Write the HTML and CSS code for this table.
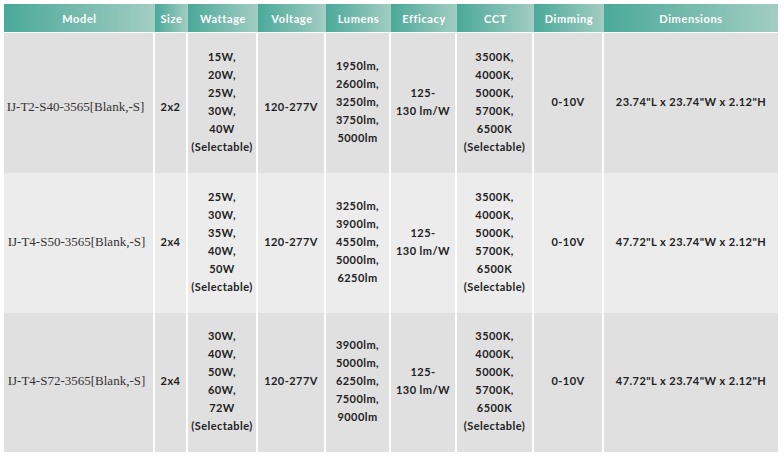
FILE: index.html
```html
<!DOCTYPE html>
<html lang="en">
<head>
<meta charset="utf-8">
<title>Specifications</title>
<link rel="stylesheet" href="styles.css">
</head>
<body>
<table class="spec">
  <colgroup>
    <col class="c-model"><col class="c-size"><col class="c-watt"><col class="c-volt"><col class="c-lum"><col class="c-eff"><col class="c-cct"><col class="c-dim"><col class="c-dims">
  </colgroup>
  <thead>
    <tr>
      <th>Model</th><th>Size</th><th>Wattage</th><th>Voltage</th><th>Lumens</th><th>Efficacy</th><th>CCT</th><th>Dimming</th><th>Dimensions</th>
    </tr>
  </thead>
  <tbody>
    <tr class="odd">
      <td class="model low">IJ-T2-S40-3565[Blank,-S]</td>
      <td class="low">2x2</td>
      <td>15W,<br>20W,<br>25W,<br>30W,<br>40W<br>(Selectable)</td>
      <td class="low">120-277V</td>
      <td>1950lm,<br>2600lm,<br>3250lm,<br>3750lm,<br>5000lm</td>
      <td>125-<br>130 lm/W</td>
      <td>3500K,<br>4000K,<br>5000K,<br>5700K,<br>6500K<br>(Selectable)</td>
      <td>0-10V</td>
      <td>23.74"L x 23.74"W x 2.12"H</td>
    </tr>
    <tr class="even">
      <td class="model">IJ-T4-S50-3565[Blank,-S]</td>
      <td>2x4</td>
      <td>25W,<br>30W,<br>35W,<br>40W,<br>50W<br>(Selectable)</td>
      <td>120-277V</td>
      <td>3250lm,<br>3900lm,<br>4550lm,<br>5000lm,<br>6250lm</td>
      <td>125-<br>130 lm/W</td>
      <td>3500K,<br>4000K,<br>5000K,<br>5700K,<br>6500K<br>(Selectable)</td>
      <td>0-10V</td>
      <td>47.72"L x 23.74"W x 2.12"H</td>
    </tr>
    <tr class="odd last">
      <td class="model">IJ-T4-S72-3565[Blank,-S]</td>
      <td>2x4</td>
      <td>30W,<br>40W,<br>50W,<br>60W,<br>72W<br>(Selectable)</td>
      <td>120-277V</td>
      <td>3900lm,<br>5000lm,<br>6250lm,<br>7500lm,<br>9000lm</td>
      <td>125-<br>130 lm/W</td>
      <td>3500K,<br>4000K,<br>5000K,<br>5700K,<br>6500K<br>(Selectable)</td>
      <td>0-10V</td>
      <td>47.72"L x 23.74"W x 2.12"H</td>
    </tr>
  </tbody>
</table>
</body>
</html>
```

FILE: styles.css
```css
html, body {
  margin: 0;
  padding: 0;
  background: #ffffff;
}

body {
  padding: 4px;
}

.spec {
  width: 774px;
  table-layout: fixed;
  border-collapse: separate;
  border-spacing: 0;
  font-family: Lato, "Liberation Sans", sans-serif;
}

.c-model { width: 151px; }
.c-size { width: 33px; }
.c-watt { width: 70px; }
.c-volt { width: 68px; }
.c-lum { width: 65px; }
.c-eff { width: 66px; }
.c-cct { width: 77px; }
.c-dim { width: 70px; }
.c-dims { width: 174px; }

.spec th {
  height: 29px;
  padding: 0;
  box-sizing: border-box;
  background: linear-gradient(to right, #4aa999, #a3cdc3);
  color: #ffffff;
  font-size: 11px;
  font-weight: 700;
  letter-spacing: 0.6px;
  text-align: center;
  vertical-align: middle;
  border-bottom: 1px solid #ffffff;
}

.spec td {
  height: 140px;
  box-sizing: border-box;
  padding: 0 0 3px 0;
  text-align: center;
  vertical-align: middle;
  font-size: 11px;
  font-weight: 700;
  line-height: 18px;
  letter-spacing: 0.45px;
  color: #222222;
  border-right: 2px solid #ffffff;
}

.spec td:last-child {
  border-right: none;
}

.spec tr.last td {
  height: 139px;
}

.spec tr.odd td {
  background: #e0e0e0;
}

.spec tr.even td {
  background: #ececec;
}

.spec td.model {
  font-family: "Liberation Serif", "Times New Roman", serif;
  font-weight: 400;
  font-size: 13px;
  letter-spacing: 0;
  color: #333333;
  padding-right: 4px;
}

.spec td.low {
  padding: 8px 0 0 0;
}

.spec td.model.low {
  padding-right: 6px;
}
```
